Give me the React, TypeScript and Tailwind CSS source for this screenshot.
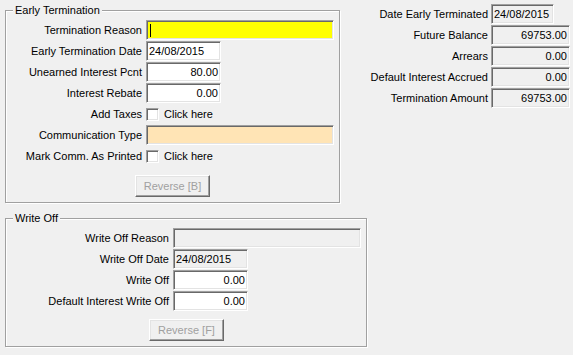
const sunken =
  'box-border border border-t-[#a0a0a0] border-l-[#a0a0a0] border-r-white border-b-white shadow-[inset_1px_1px_0_#696969,inset_-1px_-1px_0_#e3e3e3]'

function Field({
  w,
  value = '',
  right = false,
  bg = 'bg-white',
  caret = false,
}: {
  w: string
  value?: string
  right?: boolean
  bg?: string
  caret?: boolean
}) {
  return (
    <div
      className={`${sunken} ${bg} ${w} flex h-[20px] items-center px-[2px] ${
        right ? 'justify-end' : 'justify-start'
      }`}
    >
      {caret && <span className="ml-[1px] h-[13px] w-px bg-black" />}
      {value}
    </div>
  )
}

function Check() {
  return (
    <span className="flex items-center gap-[5px]">
      <span className={`${sunken} h-[13px] w-[13px] bg-white`} />
      Click here
    </span>
  )
}

function Row({ label, lw, children }: { label: string; lw: string; children: React.ReactNode }) {
  return (
    <div className="flex h-[21px] items-start gap-[4px]">
      <div className={`${lw} flex h-[20px] items-center justify-end whitespace-nowrap`}>{label}</div>
      {children}
    </div>
  )
}

function Button({ label, ml }: { label: string; ml: string }) {
  return (
    <div
      className={`${ml} box-border flex h-[22px] w-[75px] items-center justify-center border border-t-white border-l-white border-r-[#696969] border-b-[#696969] text-[#a0a0a0] shadow-[inset_-1px_-1px_0_#a0a0a0,inset_1px_1px_0_#e3e3e3]`}
    >
      {label}
    </div>
  )
}

function Group({
  title,
  w,
  children,
}: {
  title: string
  w: string
  children: React.ReactNode
}) {
  return (
    <fieldset
      className={`${w} ml-[5px] box-border border border-[#a0a0a0] shadow-[1px_1px_0_#fff,inset_1px_1px_0_#fff]`}
    >
      <legend className="ml-[7px] bg-[#f0f0f0] px-[2px] leading-[13px]">{title}</legend>
      {children}
    </fieldset>
  )
}

function Summary({ label, value, w = 'w-[79px]', right = true }: { label: string; value: string; w?: string; right?: boolean }) {
  return (
    <div className="flex h-[21px] items-start gap-[3px]">
      <div className="flex h-[20px] w-[116px] items-center justify-end whitespace-nowrap">{label}</div>
      <Field w={w} value={value} right={right} bg="bg-[#f0f0f0]" />
    </div>
  )
}

export default function App() {
  return (
    <div
      className="h-[355px] w-[573px] overflow-hidden bg-[#f0f0f0] text-[11px] leading-[13px] text-black select-none"
      style={{ fontFamily: '"Liberation Sans", Arial, sans-serif' }}
    >
      <div className="flex items-start">
        <div className="mt-[4px]">
          <Group title="Early Termination" w="w-[335px]">
            <div className="pt-[3px] pb-[5px]">
              <Row label="Termination Reason" lw="w-[136px]">
                <Field w="w-[188px]" bg="bg-[#ffff00]" caret />
              </Row>
              <Row label="Early Termination Date" lw="w-[136px]">
                <Field w="w-[75px]" value="24/08/2015" />
              </Row>
              <Row label="Unearned Interest Pcnt" lw="w-[136px]">
                <Field w="w-[75px]" value="80.00" right />
              </Row>
              <Row label="Interest Rebate" lw="w-[136px]">
                <Field w="w-[75px]" value="0.00" right />
              </Row>
              <Row label="Add Taxes" lw="w-[136px]">
                <div className="flex h-[20px] items-center">
                  <Check />
                </div>
              </Row>
              <Row label="Communication Type" lw="w-[136px]">
                <Field w="w-[188px]" bg="bg-[#ffe4b5]" />
              </Row>
              <Row label="Mark Comm. As Printed" lw="w-[136px]">
                <div className="flex h-[20px] items-center">
                  <Check />
                </div>
              </Row>
              <div className="mt-[8px]">
                <Button label="Reverse [B]" ml="ml-[129px]" />
              </div>
            </div>
          </Group>
        </div>
        <div className="mt-[4px] ml-[32px]">
          <Summary label="Date Early Terminated" value="24/08/2015" w="w-[63px]" right={false} />
          <Summary label="Future Balance" value="69753.00" />
          <Summary label="Arrears" value="0.00" />
          <Summary label="Default Interest Accrued" value="0.00" />
          <Summary label="Termination Amount" value="69753.00" />
        </div>
      </div>
      <div className="mt-[9px]">
        <Group title="Write Off" w="w-[362px]">
          <div className="pt-[3px] pb-[5px]">
            <Row label="Write Off Reason" lw="w-[163px]">
              <Field w="w-[188px]" bg="bg-[#f0f0f0]" />
            </Row>
            <Row label="Write Off Date" lw="w-[163px]">
              <Field w="w-[75px]" value="24/08/2015" bg="bg-[#f0f0f0]" />
            </Row>
            <Row label="Write Off" lw="w-[163px]">
              <Field w="w-[75px]" value="0.00" right />
            </Row>
            <Row label="Default Interest Write Off" lw="w-[163px]">
              <Field w="w-[75px]" value="0.00" right />
            </Row>
            <div className="mt-[7px]">
              <Button label="Reverse [F]" ml="ml-[143px]" />
            </div>
          </div>
        </Group>
      </div>
    </div>
  )
}
